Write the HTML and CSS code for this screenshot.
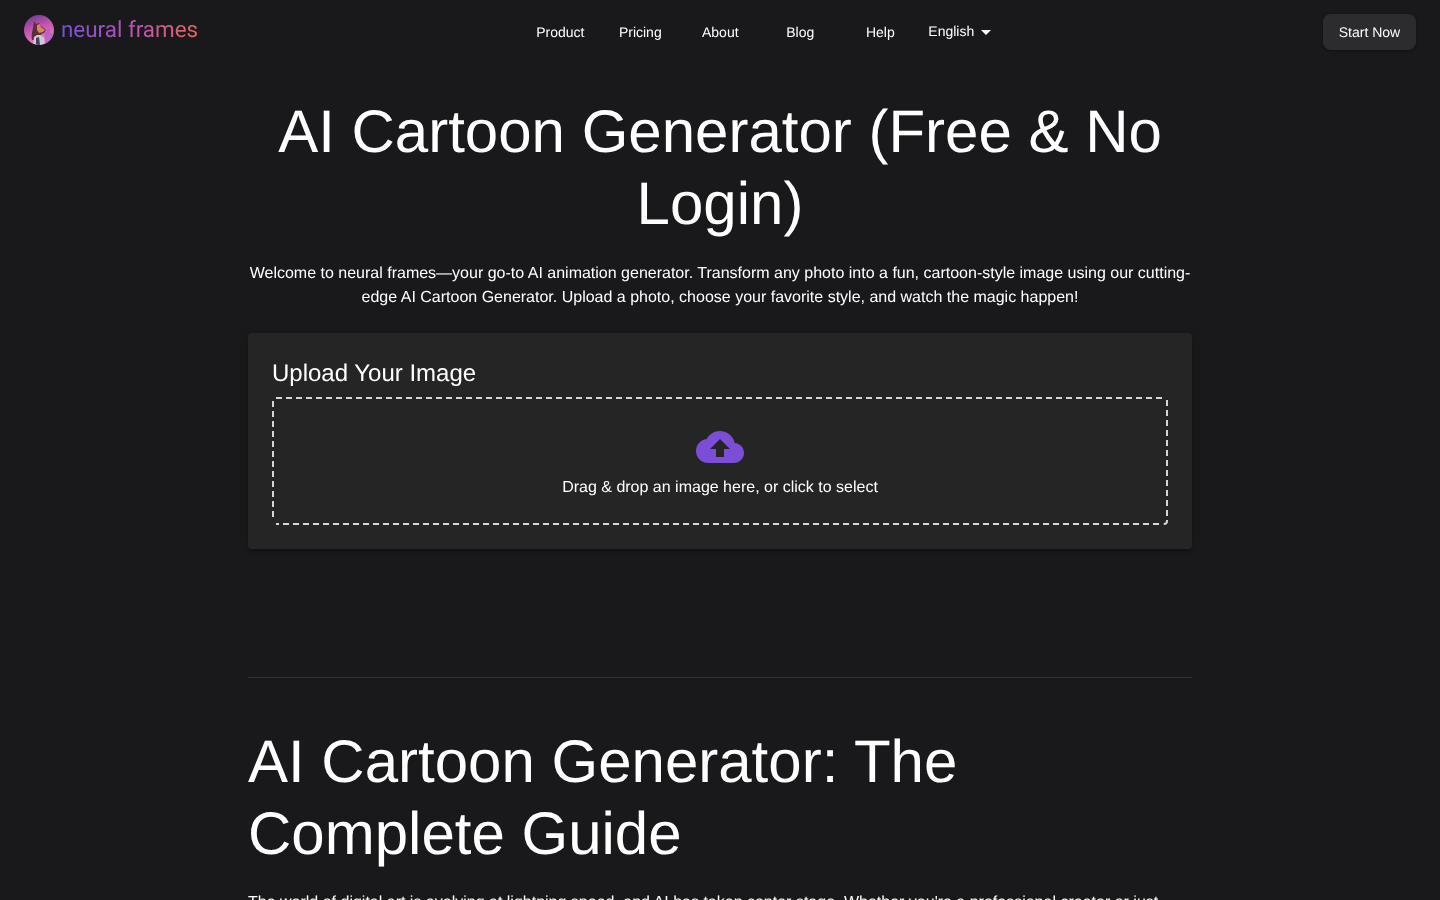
FILE: index.html
```html
<!DOCTYPE html>
<html lang="en">
<head>
<meta charset="utf-8">
<title>AI Cartoon Generator</title>
<link rel="stylesheet" href="styles.css">
</head>
<body>
<header class="topbar">
  <a class="brand" href="#">
    <svg class="brand-mark" viewBox="0 0 30 30" aria-hidden="true">
      <defs>
        <linearGradient id="bg" x1="0.2" y1="0" x2="0.6" y2="1">
          <stop offset="0" stop-color="#6f3a8e"/>
          <stop offset="0.45" stop-color="#c255b0"/>
          <stop offset="1" stop-color="#ee86cc"/>
        </linearGradient>
        <clipPath id="disc"><circle cx="15" cy="15" r="15"/></clipPath>
      </defs>
      <circle cx="15" cy="15" r="15" fill="url(#bg)"/>
      <g clip-path="url(#disc)">
        <path d="M21 30V17h2v-3h3v4h4v12z" fill="#a860c8" opacity=".7"/>
        <path d="M8 25c-1-4 0-8 1-12l1-7 2 3 3-1 2 3 5 4-2 3-3 1 1 6z" fill="#5e2f3a"/>
        <path d="M13 10l3-1 1 3 4 3-2 2-4 1-2-3z" fill="#d08a5c"/>
        <path d="M9 30l1-8 3-2 4 0 3 3 1 7z" fill="#c9ccd6"/>
        <path d="M12 23l3-1 1 8h-4z" fill="#4a4050"/>
      </g>
    </svg>
    <span class="brand-name">neural frames</span>
  </a>
  <nav class="menu">
    <a class="menu-item" href="#">Product</a>
    <a class="menu-item" href="#">Pricing</a>
    <a class="menu-item" href="#">About</a>
    <a class="menu-item" href="#">Blog</a>
    <a class="menu-item" href="#">Help</a>
    <div class="lang">
      <span>English</span>
      <svg class="lang-caret" viewBox="0 0 24 24" aria-hidden="true"><path d="M7 10l5 5 5-5z"/></svg>
    </div>
  </nav>
  <a class="cta" href="#">Start Now</a>
</header>
<main class="page">
  <h1 class="hero-title">AI Cartoon Generator (Free &amp; No Login)</h1>
  <p class="hero-text">Welcome to neural frames—your go-to AI animation generator. Transform any photo into a fun, cartoon-style image using our cutting-edge AI Cartoon Generator. Upload a photo, choose your favorite style, and watch the magic happen!</p>
  <section class="card">
    <h2 class="card-title">Upload Your Image</h2>
    <div class="dropzone">
      <svg class="dashes" viewBox="0 0 896 128" aria-hidden="true">
        <path d="M4 1H892"/>
        <path d="M895 3V123"/>
        <path d="M895 123V124Q895 127 892 127H891"/>
        <path d="M887 127H4"/>
        <path d="M1 4V124"/>
      </svg>
      <svg class="cloud" viewBox="0 0 24 24" aria-hidden="true"><path d="M19.35 10.04C18.67 6.59 15.64 4 12 4 9.11 4 6.6 5.64 5.35 8.04 2.34 8.36 0 10.91 0 14c0 3.31 2.69 6 6 6h13c2.76 0 5-2.24 5-5 0-2.64-2.05-4.78-4.65-4.96zM14 13v4h-4v-4H7l5-5 5 5h-3z"/></svg>
      <p class="drop-text">Drag &amp; drop an image here, or click to select</p>
    </div>
  </section>
  <hr class="rule">
  <h2 class="guide-title">AI Cartoon Generator: The Complete Guide</h2>
  <p class="guide-text">The world of digital art is evolving at lightning speed, and AI has taken center stage. Whether you're a professional creator or just</p>
</main>
</body>
</html>
```
FILE: styles.css
```css
* { box-sizing: border-box; }
html, body { margin: 0; padding: 0; }
body {
  background: #19191b;
  color: #fff;
  font-family: "Liberation Sans", Arial, sans-serif;
  font-size: 16px;
  line-height: 24px;
  height: 900px;
  overflow: hidden;
  text-rendering: geometricPrecision;
}
a { color: inherit; text-decoration: none; }

.topbar {
  display: flex;
  justify-content: space-between;
  align-items: flex-start;
  padding: 14px 24px 0;
  height: 60px;
  will-change: transform;
}
.brand { display: flex; align-items: center; gap: 7px; margin-top: 1px; height: 30px; width: 173.6px; }
.brand-mark { width: 30px; height: 30px; display: block; flex: none; }
.brand-name {
  font-family: Roboto, "Liberation Sans", sans-serif;
  font-size: 22.4px;
  line-height: 30px;
  margin-top: -1px;
  white-space: nowrap;
  background: linear-gradient(90deg, #7550d8 0%, #b455b8 50%, #e8655a 100%);
  -webkit-background-clip: text;
  background-clip: text;
  color: transparent;
}
.menu { display: flex; width: 480px; align-items: center; height: 36px; }
.menu-item { width: 80px; text-align: center; font-size: 14px; line-height: 36px; }
.lang { display: flex; align-items: center; font-size: 14px; margin: -2px 0 0 8px; }
.lang-caret { width: 24px; height: 24px; fill: #fff; position: relative; top: 1px; }
.cta {
  width: 93px;
  height: 36px;
  border-radius: 8px;
  background: #2c2c2f;
  box-shadow: 0 1px 3px rgba(0,0,0,.4);
  font-size: 14px;
  line-height: 36px;
  text-align: center;
}

.page { width: 944px; margin: 0 auto; will-change: transform; }
.hero-title {
  margin: 36px 0 0;
  font-size: 60px;
  line-height: 72px;
  font-weight: 400;
  text-align: center;
}
.hero-text { margin: 22px 0 0; text-align: center; }

.card {
  margin-top: 23px;
  padding: 24px;
  height: 216px;
  background: #252525;
  border-radius: 4px;
  box-shadow: 0 3px 3px -2px rgba(0,0,0,.2), 0 3px 4px rgba(0,0,0,.14), 0 1px 8px rgba(0,0,0,.12);
}
.card-title { margin: 0; font-size: 24px; line-height: 34px; font-weight: 400; height: 40px; }
.dropzone {
  position: relative;
  height: 128px;
  display: flex;
  flex-direction: column;
  align-items: center;
  padding-top: 26px;
}
.dashes {
  position: absolute;
  inset: 0;
  width: 896px;
  height: 128px;
  fill: none;
  stroke: #d6d6d6;
  stroke-width: 2;
  stroke-dasharray: 6 4;
}
.cloud { width: 48px; height: 48px; fill: #7c4dd6; display: block; }
.drop-text { margin: 5px 0 0; }

.rule { margin: 128px 0 0; border: 0; border-top: 1px solid #333337; height: 1px; }
.guide-title { margin: 48px 0 0; font-size: 60px; line-height: 72px; font-weight: 400; }
.guide-text { margin: 21px 0 0; }
```
